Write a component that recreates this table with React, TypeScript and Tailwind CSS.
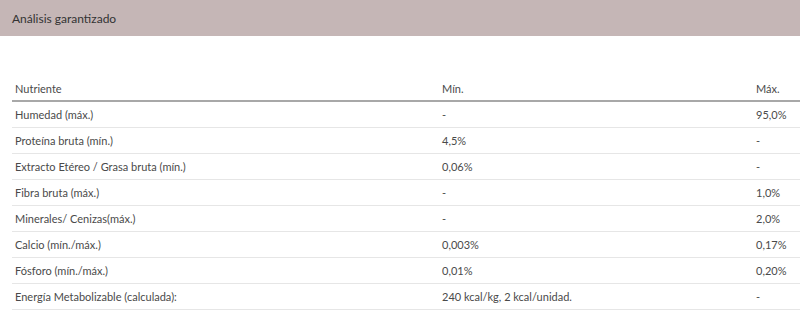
const rows: [string, string, string][] = [
  ['Humedad (máx.)', '-', '95,0%'],
  ['Proteína bruta (mín.)', '4,5%', '-'],
  ['Extracto Etéreo / Grasa bruta (mín.)', '0,06%', '-'],
  ['Fibra bruta (máx.)', '-', '1,0%'],
  ['Minerales/ Cenizas(máx.)', '-', '2,0%'],
  ['Calcio (mín./máx.)', '0,003%', '0,17%'],
  ['Fósforo (mín./máx.)', '0,01%', '0,20%'],
  ['Energía Metabolizable (calculada):', '240 kcal/kg, 2 kcal/unidad.', '-'],
];

export default function App() {
  return (
    <div className="w-[800px] h-[335px] bg-white overflow-hidden text-[#4a4a4a] font-['Lato','Open_Sans',sans-serif] text-[11px]">
      <div className="h-[36px] bg-[#c5b6b6] flex items-center px-3 pt-[1px] text-[12px] text-[#333]">
        Análisis garantizado
      </div>

      <div className="ml-3 mt-[41px]">
        <div className="grid grid-cols-[426px_314px_1fr] h-[25px] pt-[2px] items-center border-b-2 border-[#a8a8a8]">
          <span className="pl-[3px]">Nutriente</span>
          <span className="pl-[4px]">Mín.</span>
          <span className="pl-[4px]">Máx.</span>
        </div>
        {rows.map(([n, min, max]) => (
          <div
            key={n}
            className="grid grid-cols-[426px_314px_1fr] h-[26px] pt-[2px] items-center border-b border-[#e6e6e6]"
          >
            <span className="pl-[3px]">{n}</span>
            <span className="pl-[4px]">{min}</span>
            <span className="pl-[4px]">{max}</span>
          </div>
        ))}
      </div>
    </div>
  );
}
